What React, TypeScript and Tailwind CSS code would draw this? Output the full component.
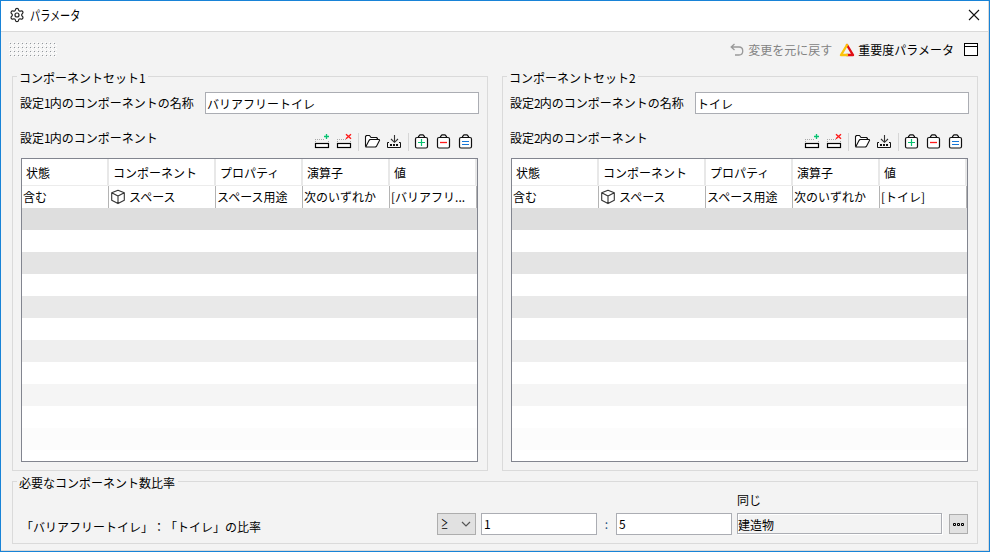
import type { ReactNode } from 'react';
import { Settings } from 'lucide-react';

const ROWS = [
  'bg-[#dedede]',
  'bg-white',
  'bg-[#e4e4e4]',
  'bg-white',
  'bg-[#e9e9e9]',
  'bg-white',
  'bg-[#efefef]',
  'bg-white',
  'bg-[#f5f5f5]',
  'bg-white',
  'bg-[#fcfcfc]',
];

const COLUMNS = [
  { label: '状態', width: 'w-[87px]' },
  { label: 'コンポーネント', width: 'w-[107px]' },
  { label: 'プロパティ', width: 'w-[87px]' },
  { label: '演算子', width: 'w-[87px]' },
  { label: '値', width: 'w-[87px]' },
];

/* Toolbar icons, each one drawn in a 22x18 cell */
const ToolIcon = ({ children }: { children: ReactNode }) => (
  <svg width="22" height="18" viewBox="0 0 22 18" fill="none" stroke="#111" className="shrink-0">
    {children}
  </svg>
);

const RowBox = () => (
  <>
    <path d="M4 6.5H14M4 8.5H5M17 8.5H18" stroke="#a8a8a8" strokeDasharray="1 1" />
    <rect x="4.5" y="10.5" width="13" height="4" fill="#fff" stroke="#000" strokeWidth="1.2" />
  </>
);

const Bag = ({ children }: { children: ReactNode }) => (
  <ToolIcon>
    <rect x="4.5" y="4.5" width="12" height="10.5" rx="1.5" fill="#fff" strokeWidth="1.2" />
    <path d="M7.5 4.5V3.5L9 1.8H12L13.5 3.5V4.5" strokeWidth="1.2" />
    {children}
  </ToolIcon>
);

const Divider = () => (
  <div className="flex h-[18px] w-[6px] shrink-0 justify-center">
    <div className="w-px bg-[#d6d6d6]" />
  </div>
);

const TableToolbar = () => (
  <div className="mt-px flex">
    <ToolIcon>
      <RowBox />
      <path d="M13 3.5H18M15.5 1V6" stroke="#06c270" strokeWidth="1.3" />
    </ToolIcon>
    <ToolIcon>
      <RowBox />
      <path d="M13 1.2L18 5.8M18 1.2L13 5.8" stroke="#ff1a1a" strokeWidth="1.4" />
    </ToolIcon>
    <Divider />
    <ToolIcon>
      <path
        d="M4.5 13.5V3.5L5.5 2.5H8.5L10 4.5H15.5L16.5 5.5V6.5M4.8 13.8L8 7.5L9 6.5H18.2L18.6 7.2L15.5 13.2L14.5 14H5Z"
        fill="#fff"
        strokeWidth="1.1"
        strokeLinejoin="round"
      />
    </ToolIcon>
    <ToolIcon>
      <path d="M11.5 2V9M8 6L11.5 9.3L15 6" stroke="#333" strokeWidth="1.1" />
      <path d="M6 9.5H4.5V14.5H17.5V9.5H16" />
      <path d="M7 12H16" strokeWidth="2" strokeDasharray="2 1" />
    </ToolIcon>
    <Divider />
    <Bag>
      <path d="M7 9.5H14M10.5 6V13" stroke="#06c270" strokeWidth="1.2" />
    </Bag>
    <Bag>
      <path d="M7 9.5H14" stroke="#ff1a1a" strokeWidth="1.3" />
    </Bag>
    <Bag>
      <path d="M7 8.5H14M7 11.5H14" stroke="#1878d8" />
    </Bag>
  </div>
);

const CubeIcon = () => (
  <svg width="16" height="16" viewBox="0 0 16 16" fill="none" stroke="#333" strokeWidth="1.1" strokeLinejoin="round">
    <path d="M8 1.2L14.3 3.8V11.3L8 14.6L1.7 11.3V3.8ZM1.7 3.8L8 7L14.3 3.8M8 7V14.6" />
  </svg>
);

const GroupBox = ({ title, className, children }: { title: ReactNode; className?: string; children: ReactNode }) => (
  <section className={`flex flex-col border border-[#dadada] ${className}`}>
    <div className="-mt-[7px] ml-1 h-4 self-start bg-[#f3f3f3] pr-[3px] pl-[2px] leading-[15px]">{title}</div>
    {children}
  </section>
);

const ComponentTable = ({ value }: { value: string }) => {
  const cells: ReactNode[] = ['含む', 'スペース', 'スペース用途', '次のいずれか', value];

  return (
    <div className="ml-2 h-[304px] w-[457px] overflow-hidden border border-[#82858f] bg-white">
      <div className="flex h-[27px] border-b border-[#ececec]">
        {COLUMNS.map(col => (
          <div key={col.label} className={`${col.width} shrink-0 border-r-2 border-[#e8e8e8] pl-[4px] leading-[28px]`}>
            {col.label}
          </div>
        ))}
      </div>
      <div className="flex h-[22px]">
        {cells.map((cell, i) => (
          <div
            key={i}
            className={`${COLUMNS[i].width} flex shrink-0 items-center border-r border-[#b4b4b4] pl-px`}
          >
            {i === 1 && <span className="mr-[3px] shrink-0"><CubeIcon /></span>}
            {cell}
          </div>
        ))}
      </div>
      {ROWS.map((color, i) => (
        <div key={i} className={`h-[22px] ${color}`} />
      ))}
    </div>
  );
};

const ComponentSet = ({ index, name, value }: { index: number; name: string; value: string }) => {
  const digit = <span className="-mr-px">{index}</span>;

  return (
    <GroupBox title={<>コンポーネントセット{digit}</>} className="h-[395px] w-[476px]">
      <div className="mt-[6px] flex items-center pl-[7px]">
        <span className="w-[185px]">設定{digit}内のコンポーネントの名称</span>
        <div className="h-[22px] w-[274px] border border-[#abadb3] bg-white pl-px leading-[21px]">{name}</div>
      </div>
      <div className="mt-[18px] flex h-[26px] justify-between pr-[10px] pl-[7px]">
        <span className="leading-[11px]">設定{digit}内のコンポーネント</span>
        <TableToolbar />
      </div>
      <ComponentTable value={value} />
    </GroupBox>
  );
};

const TitleBar = () => (
  <header className="flex h-[31px] shrink-0 items-center justify-between border-b border-[#d9d9d9] bg-white pr-[8px] pb-[2px] pl-2">
    <div className="flex items-center">
      <Settings size={16} strokeWidth={1.8} color="#222" />
      <span className="ml-[5px] inline-block origin-left scale-x-[0.78] text-[13px]">パラメータ</span>
    </div>
    <svg width="12" height="12" viewBox="0 0 12 12" stroke="#111" strokeWidth="1.1">
      <path d="M1 1L11 11M11 1L1 11" />
    </svg>
  </header>
);

const ActionBar = () => (
  <div className="flex h-[35px] items-center justify-between pr-[9px] pl-2">
    <svg width="48" height="16">
      <defs>
        <pattern id="grip" width="4" height="4" patternUnits="userSpaceOnUse">
          <rect x="1" y="1" width="1" height="1" fill="#92979c" />
          <rect x="3" y="3" width="1" height="1" fill="#fff" />
          <rect x="2" y="2" width="1" height="1" fill="#fff" />
          <rect x="0" y="0" width="1" height="1" fill="#fff" />
        </pattern>
      </defs>
      <rect width="48" height="15" fill="url(#grip)" />
    </svg>
    <div className="flex items-center">
      <svg width="14" height="14" viewBox="0 0 14 14" fill="none" stroke="#999" strokeWidth="1.3">
        <path d="M4.5 1L1.2 4L4.5 7M1.5 4H9C14 4 14 12 9 12H5" />
      </svg>
      <span className="ml-[4px] text-[#838383]">変更を元に戻す</span>
      <svg width="16" height="14" viewBox="0 0 16 14" fill="none" strokeWidth="2.4" strokeLinejoin="round" strokeLinecap="round" className="ml-[7px]">
        <path d="M8 12H14L8 2" stroke="#e00d14" />
        <path d="M8 2L2 12H8" stroke="#fbc30c" />
      </svg>
      <span className="ml-[3px]">重要度パラメータ</span>
      <svg width="15" height="13" viewBox="0 0 15 13" fill="none" stroke="#000" className="ml-[10px]">
        <rect x="0.5" y="0.5" width="13" height="12" fill="#fff" />
        <path d="M0 3.5H14" />
      </svg>
    </div>
  </div>
);

const NumberBox = ({ value }: { value: number }) => (
  <div className="h-[22px] w-[116px] border border-[#abadb3] bg-white pl-[2px] leading-[20px]">{value}</div>
);

export default function App() {
  return (
    <div className="h-[552px] w-[990px] border border-[#1883d7] bg-[#f3f3f3] font-['Noto_Sans_CJK_JP',sans-serif] text-[12px] leading-4 whitespace-nowrap text-black [text-spacing-trim:space-all]">
      <div className="flex h-full flex-col border-r border-b border-[#d9d9d9]">
        <TitleBar />
        <ActionBar />

        <main className="mt-[9px] flex gap-[14px] pl-[11px]">
          <ComponentSet index={1} name="バリアフリートイレ" value="[バリアフリ..." />
          <ComponentSet index={2} name="トイレ" value="[トイレ]" />
        </main>

        <GroupBox title="必要なコンポーネント数比率" className="mt-[10px] ml-[11px] h-[63px] w-[966px]">
          <div className="mt-px flex h-4 pl-[724px]">同じ</div>
          <div className="mt-[5px] flex items-start pl-2">
            <span className="mt-[6px] w-[416px]">「バリアフリートイレ」：「トイレ」の比率</span>
            <div className="mr-[5px] flex h-[22px] w-[39px] items-center justify-between border border-[#adadad] bg-[#e1e1e1] pr-[4px] pl-[3px]">
              <span className="inline-block origin-left scale-x-[0.6]">≥</span>
              <svg width="10" height="6" viewBox="0 0 10 6" fill="none" stroke="#555" strokeWidth="1.2">
                <path d="M1 1L5 5L9 1" />
              </svg>
            </div>
            <NumberBox value={1} />
            <span className="mt-[3px] w-[19px] text-center text-[#1f4f7f]">:</span>
            <NumberBox value={5} />
            <div className="ml-[5px] h-[21px] w-[205px] border border-[#abadb3] leading-[21px] shadow-[1px_1px_0_#fff,inset_1px_1px_0_#fff]">建造物</div>
            <div className="mt-px ml-[7px] flex h-5 w-[19px] items-center justify-center border border-[#adadad] bg-[#e1e1e1]">
              <svg width="11" height="3" viewBox="0 0 11 3" fill="none" stroke="#000">
                <path d="M0.5 0.5H2.5V2.5H0.5ZM4.5 0.5H6.5V2.5H4.5ZM8.5 0.5H10.5V2.5H8.5Z" />
              </svg>
            </div>
          </div>
        </GroupBox>
      </div>
    </div>
  );
}
